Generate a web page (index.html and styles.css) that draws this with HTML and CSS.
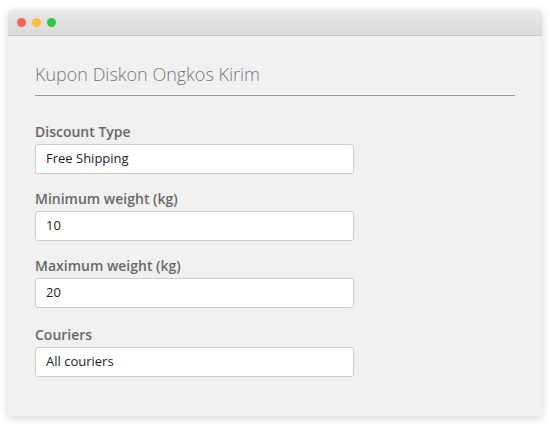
FILE: index.html
```html
<!DOCTYPE html>
<html>
<head>
<meta charset="utf-8">
<link rel="stylesheet" href="styles.css">
</head>
<body>
<div class="window">
  <div class="titlebar">
    <span class="dot red"></span>
    <span class="dot yellow"></span>
    <span class="dot green"></span>
  </div>
  <div class="content">
    <h1 class="heading">Kupon Diskon Ongkos Kirim</h1>
    <div class="field">
      <label class="label">Discount Type</label>
      <div class="input">Free Shipping</div>
    </div>
    <div class="field">
      <label class="label">Minimum weight (kg)</label>
      <div class="input">10</div>
    </div>
    <div class="field">
      <label class="label">Maximum weight (kg)</label>
      <div class="input">20</div>
    </div>
    <div class="field field-last">
      <label class="label">Couriers</label>
      <div class="input">All couriers</div>
    </div>
  </div>
</div>
</body>
</html>
```
FILE: styles.css
```css
html, body {
  margin: 0;
  padding: 0;
  background: #ffffff;
}
body {
  padding: 10px 8px;
  font-family: "Open Sans", "Noto Sans", sans-serif;
}
.window {
  width: 534px;
  height: 406px;
  background: #f0f0f0;
  border-radius: 4px;
  box-shadow: 0 2px 8px rgba(0,0,0,0.18);
  overflow: hidden;
  display: flex;
  flex-direction: column;
}
.titlebar {
  height: 25px;
  flex: none;
  background: linear-gradient(#e9e9e9, #d9d9d9);
  border-bottom: 1px solid #c6c6c6;
  display: flex;
  align-items: center;
  gap: 6px;
  padding-left: 9px;
}
.dot {
  width: 9px;
  height: 9px;
  border-radius: 50%;
  display: block;
}
.red { background: #fc5f5a; }
.yellow { background: #fdbb3b; }
.green { background: #2ec940; }
.content {
  padding: 25px 27px 0 27px;
}
.heading {
  margin: 0;
  font-weight: 300;
  font-size: 18px;
  line-height: 26px;
  color: #777;
  padding-bottom: 8px;
  border-bottom: 1px solid #999;
  margin-bottom: 26px;
}
.field {
  margin-bottom: 15px;
}
.field-last {
  padding-top: 2px;
}
.label {
  display: block;
  font-size: 14px;
  font-weight: 600;
  color: #686868;
  line-height: 19px;
  margin-bottom: 3px;
}
.input {
  width: 319px;
  height: 30px;
  box-sizing: border-box;
  background: #fff;
  border: 1px solid #ccc;
  border-radius: 3px;
  font-size: 13px;
  color: #222;
  line-height: 26px;
  padding-left: 10px;
}
```
